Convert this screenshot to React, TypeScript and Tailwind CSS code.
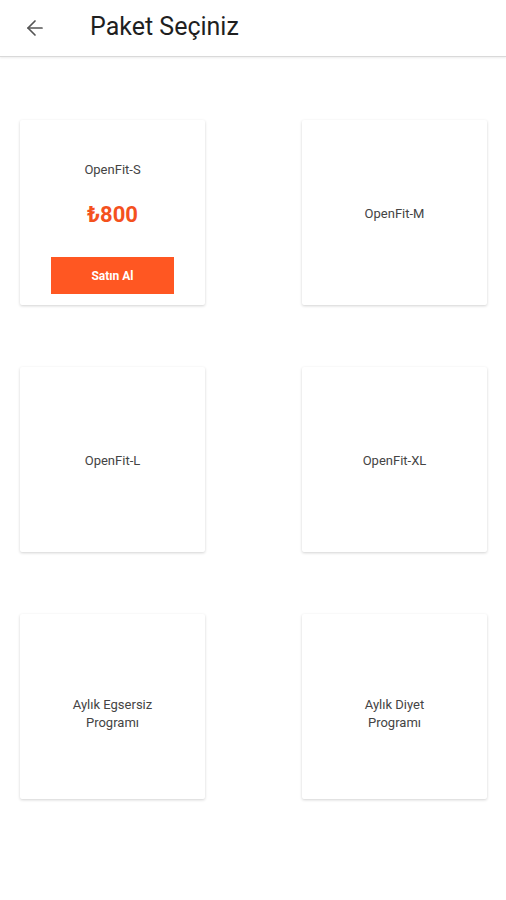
import { ArrowLeft } from 'lucide-react';

interface Paket {
  name: string[];
  price?: string;
}

const paketler: Paket[] = [
  { name: ['OpenFit-S'], price: '₺800' },
  { name: ['OpenFit-M'] },
  { name: ['OpenFit-L'] },
  { name: ['OpenFit-XL'] },
  { name: ['Aylık Egsersiz', 'Programı'] },
  { name: ['Aylık Diyet', 'Programı'] },
];

function PaketCard({ paket }: { paket: Paket }) {
  if (paket.price) {
    return (
      <div className="w-[185px] h-[185px] bg-white rounded-[2px] shadow-[0_1px_3px_rgba(0,0,0,0.18)] flex flex-col items-center pt-[43px]">
        <div className="text-[13px] text-[#444] leading-none">{paket.name[0]}</div>
        <div className="text-[22px] font-bold text-[#f4511e] leading-none mt-[28px]">{paket.price}</div>
        <button className="mt-[31px] w-[123px] h-[37px] bg-[#ff5722] text-white text-[12px] font-bold">
          Satın Al
        </button>
      </div>
    );
  }
  const multi = paket.name.length > 1;
  return (
    <div className="w-[185px] h-[185px] bg-white rounded-[2px] shadow-[0_1px_3px_rgba(0,0,0,0.18)] flex flex-col items-center justify-center">
      <div className={`text-[13px] text-[#444] leading-[18px] text-center ${multi ? 'mt-[15px]' : 'mt-[2px]'}`}>
        {paket.name.map((line) => (
          <div key={line}>{line}</div>
        ))}
      </div>
    </div>
  );
}

export default function App() {
  return (
    <div className="w-[506px] h-[900px] bg-white font-['Roboto','Liberation_Sans',sans-serif]">
      <div className="h-[57px] flex items-center border-b border-[#d9d9d9] shadow-[0_1px_2px_rgba(0,0,0,0.08)]">
        <ArrowLeft className="ml-[23px] w-[24px] h-[24px] text-[#555]" strokeWidth={1.7} />
        <h1 className="ml-[43px] -mt-[3px] text-[25px] text-[#1f1f1f] font-normal">Paket Seçiniz</h1>
      </div>
      <div className="grid grid-cols-[185px_185px] gap-x-[97px] gap-y-[62px] pl-[20px] pt-[63px]">
        {paketler.map((p) => (
          <PaketCard key={p.name.join(' ')} paket={p} />
        ))}
      </div>
    </div>
  );
}
